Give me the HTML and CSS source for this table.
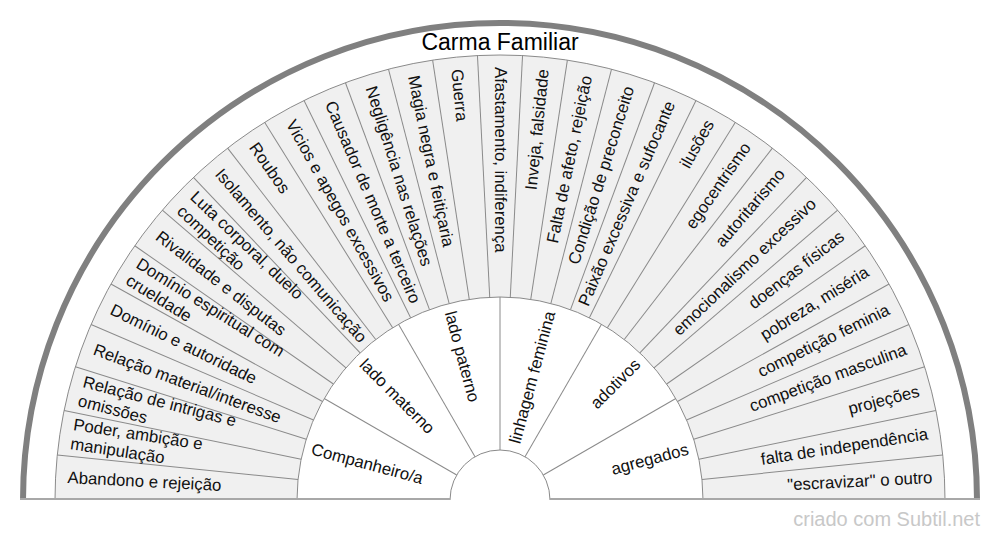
FILE: index.html
```html
<!DOCTYPE html>
<html lang="pt">
<head>
<meta charset="utf-8">
<title>Carma Familiar</title>
<link rel="stylesheet" href="styles.css">
</head>
<body>
<main class="page">
  <svg class="chart" width="1000" height="500" viewBox="0 0 1000 500" xmlns="http://www.w3.org/2000/svg">
    <path class="frame" d="M 23 500 A 477 477 0 0 1 977 500"/>
    <text class="title" x="500" y="50">Carma Familiar</text>
    <g transform="translate(500,500)">
      <path class="ring-outer" d="M -445 0 A 445 445 0 0 1 445 0 L 203 0 A 203 203 0 0 0 -203 0 Z"/>
      <path class="ring-inner" d="M -203 0 A 203 203 0 0 1 203 0 L 50 0 A 50 50 0 0 0 -50 0 Z"/>
      <path class="edge" d="M -445 0 A 445 445 0 0 1 445 0"/>
      <path class="edge" d="M -203 0 A 203 203 0 0 1 203 0"/>
      <path class="edge" d="M -50 0 A 50 50 0 0 1 50 0"/>
      <g class="spokes">
        <line x1="-445" y1="0" x2="-203" y2="0" transform="rotate(5.806)"/>
        <line x1="-445" y1="0" x2="-203" y2="0" transform="rotate(11.613)"/>
        <line x1="-445" y1="0" x2="-203" y2="0" transform="rotate(17.419)"/>
        <line x1="-445" y1="0" x2="-203" y2="0" transform="rotate(23.226)"/>
        <line x1="-445" y1="0" x2="-203" y2="0" transform="rotate(29.032)"/>
        <line x1="-445" y1="0" x2="-203" y2="0" transform="rotate(34.839)"/>
        <line x1="-445" y1="0" x2="-203" y2="0" transform="rotate(40.645)"/>
        <line x1="-445" y1="0" x2="-203" y2="0" transform="rotate(46.452)"/>
        <line x1="-445" y1="0" x2="-203" y2="0" transform="rotate(52.258)"/>
        <line x1="-445" y1="0" x2="-203" y2="0" transform="rotate(58.065)"/>
        <line x1="-445" y1="0" x2="-203" y2="0" transform="rotate(63.871)"/>
        <line x1="-445" y1="0" x2="-203" y2="0" transform="rotate(69.677)"/>
        <line x1="-445" y1="0" x2="-203" y2="0" transform="rotate(75.484)"/>
        <line x1="-445" y1="0" x2="-203" y2="0" transform="rotate(81.290)"/>
        <line x1="-445" y1="0" x2="-203" y2="0" transform="rotate(87.097)"/>
        <line x1="-445" y1="0" x2="-203" y2="0" transform="rotate(92.903)"/>
        <line x1="-445" y1="0" x2="-203" y2="0" transform="rotate(98.710)"/>
        <line x1="-445" y1="0" x2="-203" y2="0" transform="rotate(104.516)"/>
        <line x1="-445" y1="0" x2="-203" y2="0" transform="rotate(110.323)"/>
        <line x1="-445" y1="0" x2="-203" y2="0" transform="rotate(116.129)"/>
        <line x1="-445" y1="0" x2="-203" y2="0" transform="rotate(121.935)"/>
        <line x1="-445" y1="0" x2="-203" y2="0" transform="rotate(127.742)"/>
        <line x1="-445" y1="0" x2="-203" y2="0" transform="rotate(133.548)"/>
        <line x1="-445" y1="0" x2="-203" y2="0" transform="rotate(139.355)"/>
        <line x1="-445" y1="0" x2="-203" y2="0" transform="rotate(145.161)"/>
        <line x1="-445" y1="0" x2="-203" y2="0" transform="rotate(150.968)"/>
        <line x1="-445" y1="0" x2="-203" y2="0" transform="rotate(156.774)"/>
        <line x1="-445" y1="0" x2="-203" y2="0" transform="rotate(162.581)"/>
        <line x1="-445" y1="0" x2="-203" y2="0" transform="rotate(168.387)"/>
        <line x1="-445" y1="0" x2="-203" y2="0" transform="rotate(174.194)"/>
        <line x1="-203" y1="0" x2="-50" y2="0" transform="rotate(30)"/>
        <line x1="-203" y1="0" x2="-50" y2="0" transform="rotate(60)"/>
        <line x1="-203" y1="0" x2="-50" y2="0" transform="rotate(90)"/>
        <line x1="-203" y1="0" x2="-50" y2="0" transform="rotate(120)"/>
        <line x1="-203" y1="0" x2="-50" y2="0" transform="rotate(150)"/>
      </g>
      <line class="base" x1="-480" y1="-1" x2="-50" y2="-1"/>
      <line class="base" x1="50" y1="-1" x2="480" y2="-1"/>

      <g class="labels">
        <text transform="rotate(2.903)" x="-433" y="5">Abandono e rejeição</text>
        <text transform="rotate(8.710)"><tspan x="-433" y="-4.6">Poder, ambição e</tspan><tspan x="-433" y="14.8">manipulação</tspan></text>
        <text transform="rotate(14.516)"><tspan x="-433" y="-4.6">Relação de intrigas e</tspan><tspan x="-433" y="14.8">omissões</tspan></text>
        <text transform="rotate(20.323)" x="-433" y="5">Relação material/interesse</text>
        <text transform="rotate(26.129)" x="-433" y="5">Domínio e autoridade</text>
        <text transform="rotate(31.935)"><tspan x="-433" y="-4.6">Domínio espiritual com</tspan><tspan x="-433" y="14.8">crueldade</tspan></text>
        <text transform="rotate(37.742)" x="-433" y="5">Rivalidade e disputas</text>
        <text transform="rotate(43.548)"><tspan x="-433" y="-4.6">Luta corporal, duelo</tspan><tspan x="-433" y="14.8">competição</tspan></text>
        <text transform="rotate(49.355)" x="-433" y="5">Isolamento, não comunicação</text>
        <text transform="rotate(55.161)" x="-433" y="5">Roubos</text>
        <text transform="rotate(60.968)" x="-433" y="5">Vicios e apegos excessivos</text>
        <text transform="rotate(66.774)" x="-433" y="5">Causador de morte a terceiro</text>
        <text transform="rotate(72.581)" x="-433" y="5">Negligência nas relações</text>
        <text transform="rotate(78.387)" x="-433" y="5">Magia negra e feitiçaria</text>
        <text transform="rotate(84.194)" x="-433" y="5">Guerra</text>
        <text transform="rotate(90)" x="-433" y="5">Afastamento, indiferença</text>

        <text class="end" transform="rotate(-84.194)" x="433" y="5">Inveja, falsidade</text>
        <text class="end" transform="rotate(-78.387)" x="433" y="5">Falta de afeto, rejeição</text>
        <text class="end" transform="rotate(-72.581)" x="433" y="5">Condição de preconceito</text>
        <text class="end" transform="rotate(-66.774)" x="433" y="5">Paixão excessiva e sufocante</text>
        <text class="end" transform="rotate(-60.968)" x="433" y="5">ilusões</text>
        <text class="end" transform="rotate(-55.161)" x="433" y="5">egocentrismo</text>
        <text class="end" transform="rotate(-49.355)" x="433" y="5">autoritarismo</text>
        <text class="end" transform="rotate(-43.548)" x="433" y="5">emocionalismo excessivo</text>
        <text class="end" transform="rotate(-37.742)" x="433" y="5">doenças físicas</text>
        <text class="end" transform="rotate(-31.935)" x="433" y="5">pobreza, miséria</text>
        <text class="end" transform="rotate(-26.129)" x="433" y="5">competição feminia</text>
        <text class="end" transform="rotate(-20.323)" x="433" y="5">competição masculina</text>
        <text class="end" transform="rotate(-14.516)" x="433" y="5">projeções</text>
        <text class="end" transform="rotate(-8.710)" x="433" y="5">falta de independência</text>
        <text class="end" transform="rotate(-2.903)" x="433" y="5">"escravizar" o outro</text>

        <text transform="rotate(15)" x="-195" y="5">Companheiro/a</text>
        <text transform="rotate(45)" x="-195" y="5">lado materno</text>
        <text transform="rotate(75)" x="-195" y="5">lado paterno</text>
        <text class="end" transform="rotate(-75)" x="195" y="5">linhagem feminina</text>
        <text class="end" transform="rotate(-45)" x="195" y="5">adotivos</text>
        <text class="end" transform="rotate(-15)" x="195" y="5">agregados</text>
      </g>
    </g>
  </svg>
  <footer class="credit">criado com Subtil.net</footer>
</main>
</body>
</html>
```

FILE: styles.css
```css
html, body {
  margin: 0;
  padding: 0;
  background: #ffffff;
}

.page {
  width: 1000px;
  height: 540px;
  display: flex;
  flex-direction: column;
  overflow: hidden;
}

.chart {
  display: block;
  flex: 0 0 auto;
}

.frame {
  fill: none;
  stroke: #808080;
  stroke-width: 6;
}

.title {
  font-family: "Liberation Sans", Arial, sans-serif;
  font-size: 23px;
  fill: #000000;
  text-anchor: middle;
}

.ring-outer {
  fill: #f0f0f0;
  stroke: none;
}

.ring-inner {
  fill: #ffffff;
  stroke: none;
}

.edge {
  fill: none;
  stroke: #8a8a8a;
  stroke-width: 1;
}

.spokes line {
  stroke: #8a8a8a;
  stroke-width: 1;
}

.base {
  stroke: #a8a8a8;
  stroke-width: 2;
}

.labels text {
  font-family: "Liberation Sans", Arial, sans-serif;
  font-size: 16.8px;
  fill: #111111;
}

.labels text.end {
  text-anchor: end;
}

.credit {
  flex: 0 0 auto;
  font-family: "Liberation Sans", Arial, sans-serif;
  font-size: 20px;
  line-height: 24px;
  color: #c8c8c8;
  text-align: right;
  padding: 7px 20px 0 0;
}
```
